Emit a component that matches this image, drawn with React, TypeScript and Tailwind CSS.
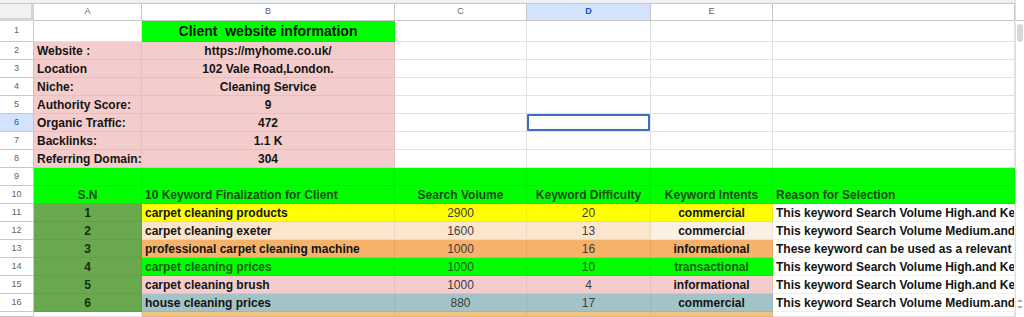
import React from 'react';

type Cell = {
  text?: string;
  bg?: string;
  align?: 'left' | 'center';
  weight?: 'bold' | 'normal';
  color?: string;
};

const WIDTHS = ['w-[108px]', 'w-[253px]', 'w-[132px]', 'w-[124px]', 'w-[122px]', 'w-[242px]'];
const LETTERS = ['A', 'B', 'C', 'D', 'E', ''];

const PINK = 'bg-[#f4cccc]';
const GREEN = 'bg-[#00ff00]';
const DARK_GREEN = 'bg-[#6aa84f]';

const info: [string, string][] = [
  ['Website :', 'https://myhome.co.uk/'],
  ['Location', '102 Vale Road,London.'],
  ['Niche:', 'Cleaning Service'],
  ['Authority Score:', '9'],
  ['Organic Traffic:', '472'],
  ['Backlinks:', '1.1 K'],
  ['Referring Domain:', '304'],
];

const keywords = [
  { n: '1', kw: 'carpet cleaning products', vol: '2900', kd: '20', intent: 'commercial', reason: 'This keyword Search Volume High.and Ke', bg: 'bg-[#ffff00]', ebg: 'bg-[#ffff00]', dark: false },
  { n: '2', kw: 'carpet cleaning exeter', vol: '1600', kd: '13', intent: 'commercial', reason: 'This keyword Search Volume Medium.and', bg: 'bg-[#fce5cd]', ebg: 'bg-[#fcefe4]', dark: false },
  { n: '3', kw: 'professional carpet cleaning machine', vol: '1000', kd: '16', intent: 'informational', reason: 'These keyword can be used as a relevant', bg: 'bg-[#f6b26b]', ebg: 'bg-[#f6b26b]', dark: false },
  { n: '4', kw: 'carpet cleaning prices', vol: '1000', kd: '10', intent: 'transactional', reason: 'This keyword Search Volume High.and Ke', bg: GREEN, ebg: GREEN, dark: true },
  { n: '5', kw: 'carpet cleaning brush', vol: '1000', kd: '4', intent: 'informational', reason: 'This keyword Search Volume High.and Ke', bg: PINK, ebg: PINK, dark: false },
  { n: '6', kw: 'house cleaning prices', vol: '880', kd: '17', intent: 'commercial', reason: 'This keyword Search Volume Medium.and', bg: 'bg-[#a2c4c9]', ebg: 'bg-[#a2c4c9]', dark: false },
];

const rows: { h: string; cells: Cell[] }[] = [
  {
    h: 'h-[21px]',
    cells: [{}, { text: 'Client  website information', bg: GREEN, align: 'center', weight: 'bold' }, {}, {}, {}, {}],
  },
  ...info.map(([label, value]) => ({
    h: 'h-[18px]',
    cells: [
      { text: label, bg: PINK, weight: 'bold' as const },
      { text: value, bg: PINK, align: 'center' as const, weight: 'bold' as const },
      {}, {}, {}, {},
    ],
  })),
  { h: 'h-[18px]', cells: Array.from({ length: 6 }, () => ({ bg: GREEN })) },
  {
    h: 'h-[18px]',
    cells: [
      { text: 'S.N', bg: GREEN, align: 'center', weight: 'bold', color: 'text-[#214a14]' },
      { text: '10 Keyword Finalization for Client', bg: GREEN, weight: 'bold', color: 'text-[#214a14]' },
      { text: 'Search Volume', bg: GREEN, align: 'center', weight: 'bold', color: 'text-[#214a14]' },
      { text: 'Keyword Difficulty', bg: GREEN, align: 'center', weight: 'bold', color: 'text-[#214a14]' },
      { text: 'Keyword Intents', bg: GREEN, align: 'center', weight: 'bold', color: 'text-[#214a14]' },
      { text: 'Reason for Selection', bg: GREEN, weight: 'bold', color: 'text-[#214a14]' },
    ],
  },
  ...keywords.map((k) => {
    const tc = k.dark ? 'text-[#1f5a14]' : undefined;
    return {
      h: 'h-[18px]',
      cells: [
        { text: k.n, bg: DARK_GREEN, align: 'center' as const, weight: 'bold' as const, color: 'text-[#15300d]' },
        { text: k.kw, bg: k.bg, weight: 'bold' as const, color: tc },
        { text: k.vol, bg: k.bg, align: 'center' as const, weight: 'normal' as const, color: tc ?? 'text-[#3c3c3c]' },
        { text: k.kd, bg: k.bg, align: 'center' as const, weight: 'normal' as const, color: tc ?? 'text-[#3c3c3c]' },
        { text: k.intent, bg: k.ebg, align: 'center' as const, weight: 'bold' as const, color: tc },
        { text: k.reason, bg: 'bg-white', weight: 'bold' as const },
      ],
    };
  }),
  {
    h: 'h-[5px]',
    cells: [{}, { bg: 'bg-[#f3c27f]' }, { bg: 'bg-[#f3c27f]' }, { bg: 'bg-[#f3c27f]' }, { bg: 'bg-[#f3c27f]' }, {}],
  },
];

function SheetRow({ index, h, cells }: { index: number; h: string; cells: Cell[] }) {
  const selected = index === 6;
  return (
    <div className={`flex ${h}`}>
      <div
        className={`w-[34px] shrink-0 border-r border-b border-[#c7c7c7] flex items-center justify-center text-[9px] ${
          selected ? 'bg-[#d3e3fd] text-[#0b57d0]' : 'bg-white text-[#5f6368]'
        }`}
      >
        {index <= 16 ? index : ''}
      </div>
      {cells.map((c, i) => (
        <div
          key={i}
          className={`${WIDTHS[i]} shrink-0 relative overflow-hidden whitespace-pre flex items-center px-[3px] border-r border-b ${
            c.bg ? `${c.bg} border-black/[0.06]` : 'border-[#e2e2e2]'
          } ${c.align === 'center' ? 'justify-center' : ''} ${
            c.weight === 'bold' ? 'font-bold' : ''
          } ${c.color ?? 'text-[#141414]'} ${index === 1 ? 'text-[14px]' : 'text-[12px]'}`}
        >
          {c.text}
          {selected && i === 3 && (
            <div className="absolute inset-0 border-2 border-[#3b6fc4] rounded-[1px]" />
          )}
        </div>
      ))}
    </div>
  );
}

export default function App() {
  return (
    <div className="w-[1024px] h-[317px] overflow-hidden bg-white font-['Liberation_Sans',Arial,sans-serif] flex">
      <div className="w-[1015px] shrink-0 flex flex-col">
        {/* top strip */}
        <div className="h-[4px] bg-[#eef0f1] border-b border-[#c7c7c7]" />
        {/* column header */}
        <div className="flex h-[17px]">
          <div className="w-[34px] shrink-0 bg-[#f1f1f1] border-r-[3px] border-b-[3px] border-[#d5d5d5]" />
          {LETTERS.map((l, i) => (
            <div
              key={i}
              className={`${WIDTHS[i]} shrink-0 flex items-center justify-center text-[9px] border-r border-b border-[#c7c7c7] ${
                l === 'D' ? 'bg-[#d3e3fd] text-[#0b57d0] font-bold' : 'bg-white text-[#5f6368]'
              }`}
            >
              {l}
            </div>
          ))}
        </div>
        {rows.map((r, idx) => (
          <SheetRow key={idx} index={idx + 1} h={r.h} cells={r.cells} />
        ))}
      </div>
      {/* scrollbar */}
      <div className="flex-1 flex flex-col border-l border-[#e0e0e0] bg-white">
        <div className="h-[21px] border-b border-[#c7c7c7]" />
        <div className="mx-auto mt-[3px] w-[6px] h-[18px] rounded-[3px] bg-[#d7d7d7]" />
        <div className="flex-1" />
        <div className="flex flex-col items-center gap-[4px] mb-[8px]">
          <div className="w-0 h-0 border-l-[3px] border-r-[3px] border-b-[3px] border-l-transparent border-r-transparent border-b-[#b0b0b0]" />
          <div className="w-0 h-0 border-l-[3px] border-r-[3px] border-t-[3px] border-l-transparent border-r-transparent border-t-[#b0b0b0]" />
        </div>
      </div>
    </div>
  );
}
